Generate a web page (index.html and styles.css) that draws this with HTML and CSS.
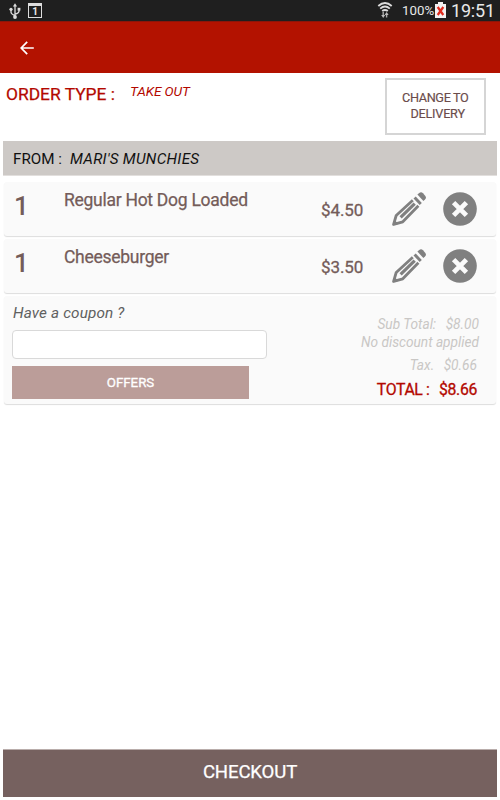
FILE: index.html
```html
<!DOCTYPE html>
<html lang="en">
<head>
<meta charset="utf-8">
<title>Order</title>
<link rel="stylesheet" href="styles.css">
</head>
<body>
<svg width="0" height="0" class="defs">
  <symbol id="pencil" viewBox="0 0 34 34">
    <path fill="#808080" d="M25.4 2.6 27.2 1Q29.2-.6 31 1.3L33.2 3.7Q34.7 5.5 33.2 7.3L31.4 9.1Z"/>
    <path fill="#808080" d="M23.7 4.4 29.8 10.9 27.7 13 21.5 6.5Z"/>
    <path fill="none" stroke="#808080" stroke-width="2.8" stroke-linejoin="round" d="M20.8 8.2 4.2 23.5 1.6 32.4 10.8 29.8 26.4 13.8"/>
    <path fill="none" stroke="#808080" stroke-width="3.2" d="M22.7 11.6 8.6 25.4"/>
    <path fill="#808080" d="M.6 33.6 2.3 27.8 6.5 32Z"/>
  </symbol>
  <symbol id="remove" viewBox="0 0 34 34">
    <circle cx="17" cy="17" r="16.8" fill="#808080"/>
    <path d="M10.6 10.6 23.4 23.4M23.4 10.6 10.6 23.4" stroke="#fafafa" stroke-width="4.8"/>
  </symbol>
</svg>
<div class="status">
  <svg class="usb" width="12" height="17" viewBox="0 0 12 17" fill="none" stroke="#ddd" stroke-width="1.3"><path d="M6 3v11M2 6v3.2Q2 11 6 12.6M10 6v2.2Q10 10 6 11.2"/><path d="M6 .2 3.9 3.6h4.2Z" fill="#ddd" stroke="none"/><circle cx="6" cy="14" r="1.9" fill="#ddd" stroke="none"/><circle cx="2" cy="6.3" r="1.6" fill="#ddd" stroke="none"/><path d="M8.6 4.8h2.8v2.8H8.6z" fill="#ddd" stroke="none"/></svg>
  <span class="calendar">1</span>
  <span class="spacer"></span>
  <svg class="wifi" width="16" height="17" viewBox="0 0 16 17" fill="none" stroke="#ddd" stroke-width="1.9"><path d="M1.3 4Q8-1.8 14.7 4M3.2 6.6Q8 2.4 12.8 6.6M5.2 9.1Q8 6.8 10.8 9.1"/><path d="M6.2 10v4M9.6 11.5v4" stroke="#aaa" stroke-width="1.4"/><path d="M4.2 13h4L6.2 16ZM7.6 13h4L9.6 10Z" fill="#bbb" stroke="none"/></svg>
  <span class="percent">100%</span>
  <svg class="battery" width="11" height="16" viewBox="0 0 11 16"><path d="M3 0h5v2h3v14H0V2h3Z" fill="#f2f2f2"/><path d="m2.7 5 5.6 8M8.3 5l-5.6 8" stroke="#e02b1d" stroke-width="2.2"/></svg>
  <span class="clock">19:51</span>
</div>
<header class="appbar">
  <svg width="14" height="14" viewBox="0 0 14 14" fill="none" stroke="#fff" stroke-width="1.7"><path d="M7.2.8 1.2 7l6 6.2M1.2 7H13.8"/></svg>
</header>
<section class="order">
  <span class="order-label">ORDER TYPE :</span>
  <span class="order-value">TAKE OUT</span>
  <button class="change"><span>CHANGE TO</span><span class="delivery">DELIVERY</span></button>
</section>
<section class="from"><span class="from-label">FROM :</span><span class="from-name">MARI'S MUNCHIES</span></section>
<main>
  <article class="card item">
    <span class="qty">1</span><span class="name">Regular Hot Dog Loaded</span><span class="price">$4.50</span>
    <svg class="edit" width="34" height="34"><use href="#pencil"/></svg>
    <svg class="remove" width="34" height="34"><use href="#remove"/></svg>
  </article>
  <article class="card item">
    <span class="qty">1</span><span class="name">Cheeseburger</span><span class="price">$3.50</span>
    <svg class="edit" width="34" height="34"><use href="#pencil"/></svg>
    <svg class="remove" width="34" height="34"><use href="#remove"/></svg>
  </article>
  <section class="card summary">
    <div class="coupon">
      <label for="coupon">Have a coupon ?</label>
      <input id="coupon" type="text">
      <button class="offers">OFFERS</button>
    </div>
    <div class="totals">
      <div class="subtotal"><span>Sub Total:</span><span>$8.00</span></div>
      <div class="discount">No discount applied</div>
      <div class="tax"><span>Tax.</span><span>$0.66</span></div>
      <div class="total"><span>TOTAL :</span><span>$8.66</span></div>
    </div>
  </section>
</main>
<button class="checkout">CHECKOUT</button>
</body>
</html>
```
FILE: styles.css
```css
* { box-sizing: border-box; }
body {
  margin: 0;
  width: 500px;
  height: 800px;
  display: flex;
  flex-direction: column;
  overflow: hidden;
  background: #fff;
  font-family: Roboto, sans-serif;
}
button { font-family: inherit; padding: 0; border: 0; }
svg { display: block; flex: none; }
span { white-space: nowrap; }
.defs { position: absolute; }

.status {
  height: 21px;
  flex: none;
  display: flex;
  align-items: flex-start;
  padding: 2px 5px 0 9px;
  background: #1f1f1f;
  color: #e8e8e8;
}
.usb { margin-top: 1px; }
.calendar {
  width: 14px;
  height: 15px;
  margin: 1px 0 0 7px;
  border: 1px solid #ddd;
  border-top-width: 3px;
  font-size: 10px;
  font-weight: 700;
  line-height: 11px;
  text-align: center;
}
.spacer { flex: 1; }
.wifi { margin: 0 2px 0 -2px; }
.percent { margin-left: 7px; width: 32px; font-size: 13.3px; line-height: 18px; }
.battery { margin: 0 0 0 1px; }
.clock { margin-left: 5px; width: 44px; font-size: 18px; line-height: 17px; letter-spacing: -.2px; }

.appbar {
  height: 52px;
  flex: none;
  display: flex;
  align-items: center;
  padding-left: 20px;
  background: #b31200;
  border-top: 1px solid #8d1509;
}

.order { height: 68px; flex: none; display: flex; padding-left: 6px; color: #b30800; }
.order-label { width: 124px; margin-top: 11px; font-size: 17.4px; line-height: 20px; -webkit-text-stroke: .25px; }
.order-value { flex: 1; margin-top: 10px; font-size: 13.6px; font-style: italic; line-height: 16px; letter-spacing: -.1px; }
.change {
  width: 101px;
  height: 57px;
  margin: 5px 14px 0 0;
  padding: 10px 0 0 15px;
  display: flex;
  flex-direction: column;
  align-items: flex-start;
  border: 2px solid #d5d5d5;
  background: #fff;
  color: #6b4c4b;
  font-size: 12.7px;
  line-height: 16px;
  letter-spacing: -.35px;
  -webkit-text-stroke: .15px;
}
.delivery { margin-left: 8.5px; letter-spacing: -.25px; }

.from {
  height: 34px;
  flex: none;
  display: flex;
  margin: 0 3px 7px;
  padding-left: 10px;
  background: #cdc9c6;
  box-shadow: 0 1px #e2dfdd;
  color: #111;
  font-size: 15.2px;
  line-height: 37px;
}
.from-label { width: 57px; }
.from-name { font-style: italic; letter-spacing: .3px; }

main { display: flex; flex-direction: column; gap: 3px; padding: 0 4px; }
.card { background: #fafafa; border-radius: 3px; box-shadow: 0 1px 1px #ddd; }
.item { height: 54px; display: flex; padding-left: 10px; color: #745c59; }
.qty { width: 50px; padding-top: 8px; font-size: 26px; font-weight: 500; line-height: 32px; }
.name { width: 257px; padding-top: 8px; font-size: 17.5px; line-height: 20px; -webkit-text-stroke: .25px; letter-spacing: -.27px; }
.price { width: 71px; padding-top: 18px; font-size: 17px; line-height: 20px; letter-spacing: -.1px; -webkit-text-stroke: .3px; }
.edit { margin-top: 10px; }
.remove { margin: 10px 0 0 17px; }

.summary { height: 108px; display: flex; justify-content: space-between; padding: 7px 17px 0 8px; }
.coupon { width: 255px; display: flex; flex-direction: column; align-items: flex-start; }
.coupon label { padding-left: 1px; font-size: 15.3px; font-style: italic; line-height: 20px; color: #606060; letter-spacing: .15px; }
.coupon input { width: 255px; height: 29px; margin: 7px 0; border: 1px solid #d9d9d9; border-radius: 4px; background: #fff; }
.offers { width: 237px; height: 33px; background: #bb9d99; color: #fff; font-size: 13.3px; -webkit-text-stroke: .3px; line-height: 33px; }
.totals { display: flex; flex-direction: column; align-items: flex-end; color: #c9c7c5; font-size: 13.7px; font-style: italic; line-height: 18px; padding-top: 12px; }
.totals > div { display: flex; justify-content: flex-end; gap: 9.5px; }
.tax { margin: 5px 2px 0 0; }
.totals .total { margin: 5px 2px 0 0; color: #b30800; font-size: 15.8px; font-style: normal; -webkit-text-stroke: .3px; line-height: 21px; letter-spacing: -.35px; }

.checkout {
  height: 47px;
  flex: none;
  margin: auto 3px 3px;
  box-shadow: 0 -1px #b9adab;
  background: #76615f;
  color: #fff;
  font-size: 18.6px;
  -webkit-text-stroke: .25px;
  letter-spacing: -.15px;
  padding-bottom: 4px;
}
```
